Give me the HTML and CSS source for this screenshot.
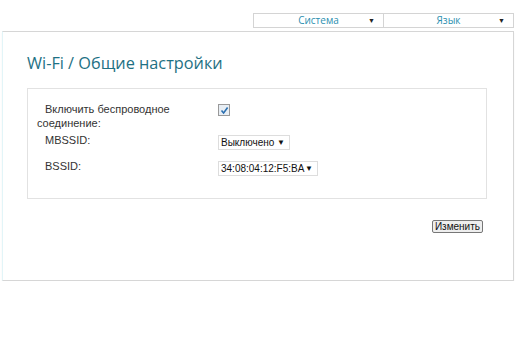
FILE: index.html
```html
<!DOCTYPE html>
<html lang="ru">
<head>
    <meta charset="UTF-8">
    <title>Wi-Fi / Общие настройки</title>
    <link rel="stylesheet" href="styles.css">
</head>
<body>
<div class="topnav">
    <div class="menu">Система <span class="arrow">&#9660;</span></div>
    <div class="menu">Язык <span class="arrow">&#9660;</span></div>
</div>

<div class="panel">
    <h1 class="title">Wi-Fi / Общие настройки</h1>

    <!-- Основные параметры -->
    <div class="settings">
        <div class="row">
            <label class="label first" for="enable">Включить беспроводное соединение:</label>
            <div class="field"><span class="check" id="enable"><svg width="9" height="9" viewBox="0 0 9 9"><path d="M1.5 4.5 L3.6 7 L7.6 1.6" fill="none" stroke="#2a6fb0" stroke-width="1.6"/></svg></span></div>
        </div>
        <div class="row">
            <label class="label">MBSSID:</label>
            <div class="field"><span class="select short">Выключено <span class="arrow">&#9660;</span></span></div>
        </div>
        <div class="row">
            <label class="label">BSSID:</label>
            <div class="field"><span class="select long">34:08:04:12:F5:BA <span class="arrow">&#9660;</span></span></div>
        </div>
    </div>

    <div class="actions">
        <button class="btn">Изменить</button>
    </div>
</div>
</body>
</html>
```

FILE: styles.css
```css
body {
    margin: 0;
    background: #fff;
    font-family: "Liberation Sans", Arial, sans-serif;
    font-size: 11px;
    color: #222;
}

.topnav {
    display: flex;
    justify-content: flex-end;
    padding: 13px 15px 0 0;
}

.topnav .menu {
    width: 129px;
    height: 13px;
    border: 1px solid #d4d4d4;
    margin-left: -1px;
    position: relative;
    text-align: center;
    font-family: "Open Sans", sans-serif;
    font-size: 10px;
    line-height: 13px;
    color: #2b8fb0;
}

.topnav .menu .arrow {
    position: absolute;
    right: 8px;
    top: 0;
    font-size: 7px;
    color: #222;
}

.panel {
    margin: 3px 15px 0 2px;
    height: 248px;
    border: 1px solid #d6d6d6;
    border-left-color: #e2f5f8;
    box-shadow: 0 2px 1px #eee;
}

.title {
    margin: 20px 0 0 24px;
    font-family: "Open Sans", sans-serif;
    font-weight: normal;
    font-size: 16.3px;
    line-height: 22px;
    color: #1e7184;
}

.settings {
    margin: 14px 26px 0 24px;
    height: 96px;
    border: 1px solid #e2e2e2;
    padding: 13px 0 0 9px;
}

.row {
    display: grid;
    grid-template-columns: 181px 1fr;
    align-items: start;
}

.label {
    line-height: 14px;
    padding-left: 8px;
    color: #333;
}

.label.first {
    padding-left: 0;
    padding-right: 30px;
    text-indent: 8px;
}

.row + .row + .row {
    margin-top: 6px;
}

.row + .row .label {
    padding-top: 3px;
}

.field {
    padding-top: 2px;
}

.row + .row .field {
    padding-top: 5px;
}

.check {
    display: inline-flex;
    align-items: center;
    justify-content: center;
    width: 10px;
    height: 10px;
    border: 1px solid #999;
    background: #e8eef4;
}

.select {
    display: inline-flex;
    align-items: center;
    justify-content: space-between;
    box-sizing: border-box;
    white-space: nowrap;
    height: 15px;
    border: 1px solid #ddd;
    padding: 0 4px 0 2px;
    font-size: 10px;
    color: #111;
}

.select .arrow {
    font-size: 8px;
}

.short {
    width: 72px;
}

.long {
    width: 100px;
}

.actions {
    display: flex;
    justify-content: flex-end;
    padding: 21px 30px 0 0;
}

.btn {
    font-family: "Liberation Sans", Arial, sans-serif;
    font-size: 10px;
    color: #111;
    background: #eee;
    border: 1px solid #777;
    border-radius: 2px;
    padding: 0 2px;
    height: 13px;
    line-height: 11px;
}
```
